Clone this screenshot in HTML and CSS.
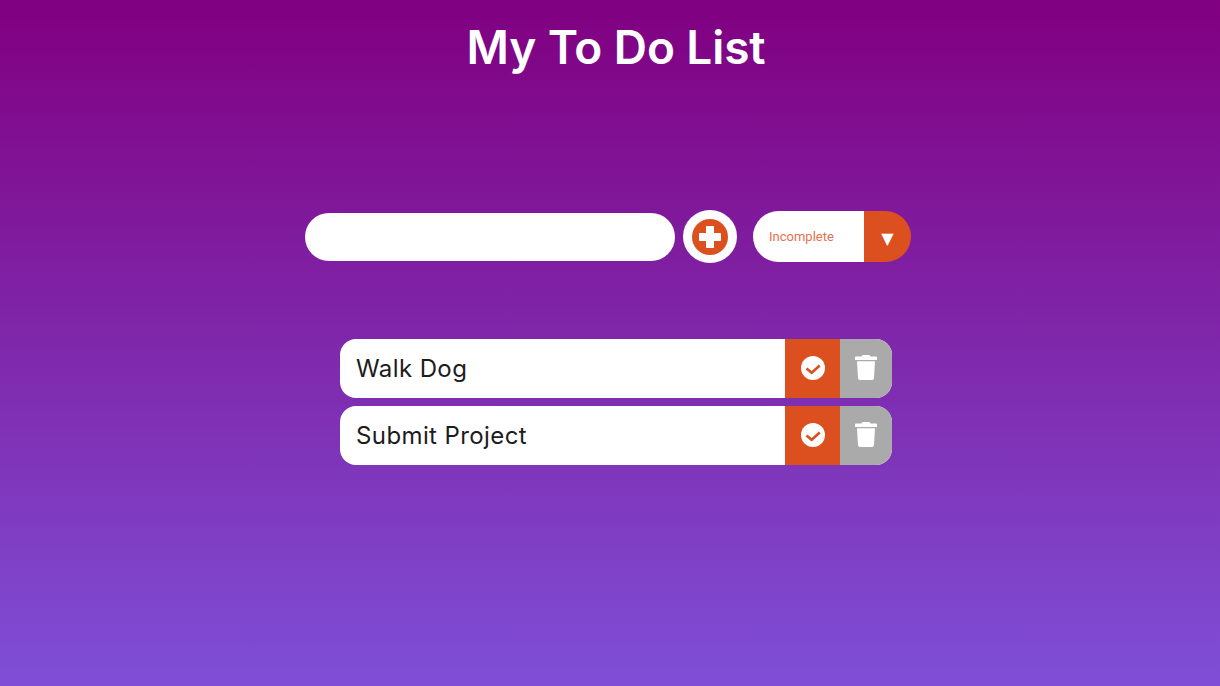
FILE: index.html
```html
<!DOCTYPE html>
<html lang="en">
<head>
    <meta charset="UTF-8">
    <meta name="viewport" content="width=device-width, initial-scale=1.0">
    <title>My To Do List</title>
    <link rel="stylesheet" href="styles.css">
</head>
<body>
    <div class="header">
        <h1>My To Do List</h1>
    </div>
    <form class="form">
        <input type="text" class="todo-input">
        <button type="button" class="add-btn">
            <svg viewBox="0 0 36 36" width="36" height="36">
                <circle cx="18" cy="18" r="18" fill="#dc4f1e"/>
                <path d="M14.500 7.500h7v7h7v7h-7v7h-7v-7h-7v-7h7z" fill="#fff" stroke="#fff" stroke-width="1" stroke-linejoin="round"/>
            </svg>
        </button>
        <div class="select">
            <select class="filter">
                <option>Incomplete</option>
                <option>Complete</option>
                <option>All</option>
            </select>
            <span class="select-arrow">&#9660;</span>
        </div>
    </form>
    <ul class="list">
        <li class="todo">
            <span class="todo-text">Walk Dog</span>
            <button class="check-btn">
                <svg viewBox="0 0 24 24" width="24" height="24">
                    <circle cx="12" cy="12" r="12" fill="#fff"/>
                    <path d="M5.500 12.500l5.200 4.300 8-7.300" fill="none" stroke="#dc4f1e" stroke-width="2.600"/>
                </svg>
            </button>
            <button class="trash-btn">
                <svg viewBox="0 0 22 25" width="22" height="25">
                    <path d="M7.500 0h7l1 1.500H21a1 1 0 0 1 1 1V5H0V2.500a1 1 0 0 1 1-1h5.500zM2 6.200h18l-1 16.800a2 2 0 0 1-2 2H5a2 2 0 0 1-2-2z" fill="#fff"/>
                </svg>
            </button>
        </li>
        <li class="todo">
            <span class="todo-text">Submit Project</span>
            <button class="check-btn">
                <svg viewBox="0 0 24 24" width="24" height="24">
                    <circle cx="12" cy="12" r="12" fill="#fff"/>
                    <path d="M5.500 12.500l5.200 4.300 8-7.300" fill="none" stroke="#dc4f1e" stroke-width="2.600"/>
                </svg>
            </button>
            <button class="trash-btn">
                <svg viewBox="0 0 22 25" width="22" height="25">
                    <path d="M7.500 0h7l1 1.500H21a1 1 0 0 1 1 1V5H0V2.500a1 1 0 0 1 1-1h5.500zM2 6.200h18l-1 16.800a2 2 0 0 1-2 2H5a2 2 0 0 1-2-2z" fill="#fff"/>
                </svg>
            </button>
        </li>
    </ul>
</body>
</html>
```

FILE: styles.css
```css
* {
    margin: 0;
    padding: 0;
    box-sizing: border-box;
}
body {
    height: 686px;
    padding-left: 12px;
    overflow: hidden;
    font-family: 'Inter', sans-serif;
    background: linear-gradient(#800080, #7e4fd6);
}
.header {
    height: 210px;
    padding-top: 16px;
    text-align: center;
}
h1 {
    font-size: 46px;
    line-height: 62px;
    font-weight: 600;
    letter-spacing: -0.1px;
    color: #fff;
}
.form {
    display: flex;
    align-items: center;
    width: 622px;
    height: 53px;
    margin: 0 auto;
    padding-right: 16px;
}
.todo-input {
    width: 370px;
    height: 48px;
    border: none;
    border-radius: 24px;
    background: #fff;
    outline: none;
}
.add-btn {
    display: flex;
    align-items: center;
    justify-content: center;
    width: 54px;
    height: 53px;
    margin-left: 8px;
    border: none;
    border-radius: 50%;
    background: #fff;
}
.select {
    display: flex;
    width: 158px;
    height: 51px;
    margin-left: 16px;
    border-radius: 26px;
    overflow: hidden;
}
.filter {
    width: 111px;
    padding-left: 16px;
    border: none;
    outline: none;
    appearance: none;
    background: #fff;
    color: #e8704c;
    font-family: 'Roboto', sans-serif;
    font-size: 13px;
}
.select-arrow {
    display: flex;
    align-items: center;
    justify-content: center;
    width: 47px;
    padding-top: 3px;
    background: #dc4f1e;
    color: #fff;
    font-family: 'DejaVu Sans', sans-serif;
    font-size: 16px;
}
.list {
    width: 552px;
    margin: 76px auto 0;
    list-style: none;
}
.todo {
    display: flex;
    height: 59px;
    margin-bottom: 8px;
    border-radius: 16px;
    background: #fff;
    overflow: hidden;
}
.todo-text {
    flex: 1;
    padding-left: 16px;
    line-height: 59px;
    font-size: 24px;
    letter-spacing: 0.4px;
    color: #1c1c1c;
}
.todo button {
    display: flex;
    align-items: center;
    justify-content: center;
    padding-bottom: 2px;
    border: none;
}
.check-btn {
    width: 55px;
    background: #dc4f1e;
}
.trash-btn {
    width: 52px;
    background: #aaa;
}
```
